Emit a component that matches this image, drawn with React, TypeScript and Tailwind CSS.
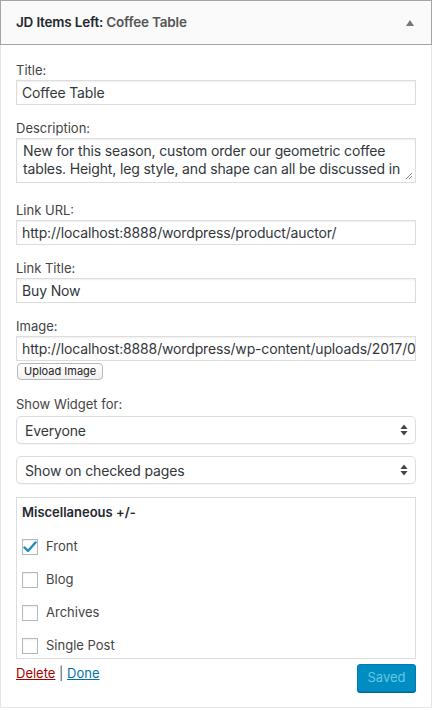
import React from 'react';

const FONT = { fontFamily: 'Inter, "Liberation Sans", Arial, sans-serif' };

// little stacked arrows like the mac select control
function SelectArrows() {
  return (
    <svg width="8" height="12" viewBox="0 0 8 12" className="shrink-0">
      <path d="M4 0.5 L7.5 5 L0.5 5 Z" fill="#444" />
      <path d="M4 11.5 L7.5 7 L0.5 7 Z" fill="#444" />
    </svg>
  );
}

function Check({ checked }: { checked?: boolean }) {
  return (
    <span className="w-4 h-4 border border-[#b4b9be] bg-white flex items-center justify-center shrink-0 shadow-[inset_0_1px_2px_rgba(0,0,0,0.07)]">
      {checked && (
        <svg width="14" height="12" viewBox="0 0 14 12">
          <path d="M1.5 6.5 L5 10 L12.5 1.5" fill="none" stroke="#1e8cbe" strokeWidth="2.4" strokeLinecap="round" strokeLinejoin="round" />
        </svg>
      )}
    </span>
  );
}

function Label({ children, className = '' }: { children: React.ReactNode; className?: string }) {
  return <div className={`text-[13px] leading-[18px] text-[#444] ${className}`}>{children}</div>;
}

function TextInput({ value }: { value: string }) {
  return (
    <div className="mt-px h-[25px] border border-[#ddd] shadow-[inset_0_1px_2px_rgba(0,0,0,0.07)] bg-white pl-[5px] flex items-center overflow-hidden whitespace-nowrap text-[14px] tracking-[-0.15px] text-[#32373c]">
      {value}
    </div>
  );
}

function Select({ value, className = '' }: { value: string; className?: string }) {
  return (
    <div className={`h-[28px] border border-[#ddd] rounded-[5px] bg-white flex items-center justify-between pl-[8px] pr-[7px] text-[14px] tracking-[-0.15px] text-[#32373c] shadow-[0_1px_1px_rgba(0,0,0,0.04)] ${className}`}>
      <span>{value}</span>
      <SelectArrows />
    </div>
  );
}

const pages = [
  { name: 'Front', checked: true },
  { name: 'Blog' },
  { name: 'Archives' },
  { name: 'Single Post' },
];

export default function App() {
  return (
    <div className="w-[432px] bg-white" style={FONT}>
      {/* widget title bar */}
      <div className="h-[45px] border border-[#a0a5aa] bg-[#fafafa] flex items-center justify-between pl-[15px] pr-[17px]">
        <div className="text-[13.5px] font-semibold tracking-[-0.2px] text-[#23282d]">
          JD Items Left: <span className="text-[#555]">Coffee Table</span>
        </div>
        <svg width="8" height="6" viewBox="0 0 8 6">
          <path d="M4 0 L8 6 L0 6 Z" fill="#72777c" />
        </svg>
      </div>

      {/* widget body */}
      <div className="border-x border-b border-[#e5e5e5] px-[15px] pt-[16px] pb-[15px]">
        <Label>Title:</Label>
        <TextInput value="Coffee Table" />

        <Label className="mt-[14px]">Description:</Label>
        <div className="mt-px h-[45px] border border-[#ddd] shadow-[inset_0_1px_2px_rgba(0,0,0,0.07)] bg-white pl-[6px] pr-[8px] pt-[3px] text-[14px] leading-[18px] tracking-[-0.15px] text-[#32373c] overflow-hidden relative">
          New for this season, custom order our geometric coffee tables. Height, leg style, and shape can all be discussed in
          <svg width="8" height="8" viewBox="0 0 8 8" className="absolute right-[2px] bottom-[2px]">
            <path d="M7 1 L1 7 M7 4 L4 7" stroke="#888" strokeWidth="1" />
          </svg>
        </div>

        <Label className="mt-[18px]">Link URL:</Label>
        <TextInput value="http://localhost:8888/wordpress/product/auctor/" />

        <Label className="mt-[14px]">Link Title:</Label>
        <TextInput value="Buy Now" />

        <Label className="mt-[14px]">Image:</Label>
        <TextInput value="http://localhost:8888/wordpress/wp-content/uploads/2017/05/coffee.jpg" />
        <button className="mt-[2px] ml-px h-[17px] px-[6px] border border-[#b8b8b8] rounded-[4px] bg-gradient-to-b from-white to-[#f1f1f1] text-[11px] leading-[15px] text-[#222] block">
          Upload Image
        </button>

        <Label className="mt-[15px]">Show Widget for:</Label>
        <Select value="Everyone" className="mt-[3px]" />
        <Select value="Show on checked pages" className="mt-[12px]" />

        {/* page checklist */}
        <div className="mt-[13px] h-[162px] border border-[#ddd] px-[5px] pt-[5px] overflow-hidden">
          <div className="text-[13px] leading-[18px] font-semibold text-[#23282d]">Miscellaneous +/-</div>
          <div className="mt-[9px] flex flex-col">
            {pages.map((p) => (
              <div key={p.name} className="h-[33px] flex items-center gap-[8px] text-[13px] text-[#444]">
                <Check checked={p.checked} />
                <span>{p.name}</span>
              </div>
            ))}
          </div>
        </div>

        <div className="mt-[5px] flex justify-between items-start">
          <div className="text-[13px] leading-[18px] text-[#555]">
            <a className="text-[#a00] underline">Delete</a> | <a className="text-[#0073aa] underline">Done</a>
          </div>
          <button className="h-[28px] w-[59px] rounded-[3px] border border-[#007cb2] bg-[#008ec2] text-[13px] text-[#66c6e4] shadow-[0_1px_0_#006799]">
            Saved
          </button>
        </div>
      </div>
    </div>
  );
}
